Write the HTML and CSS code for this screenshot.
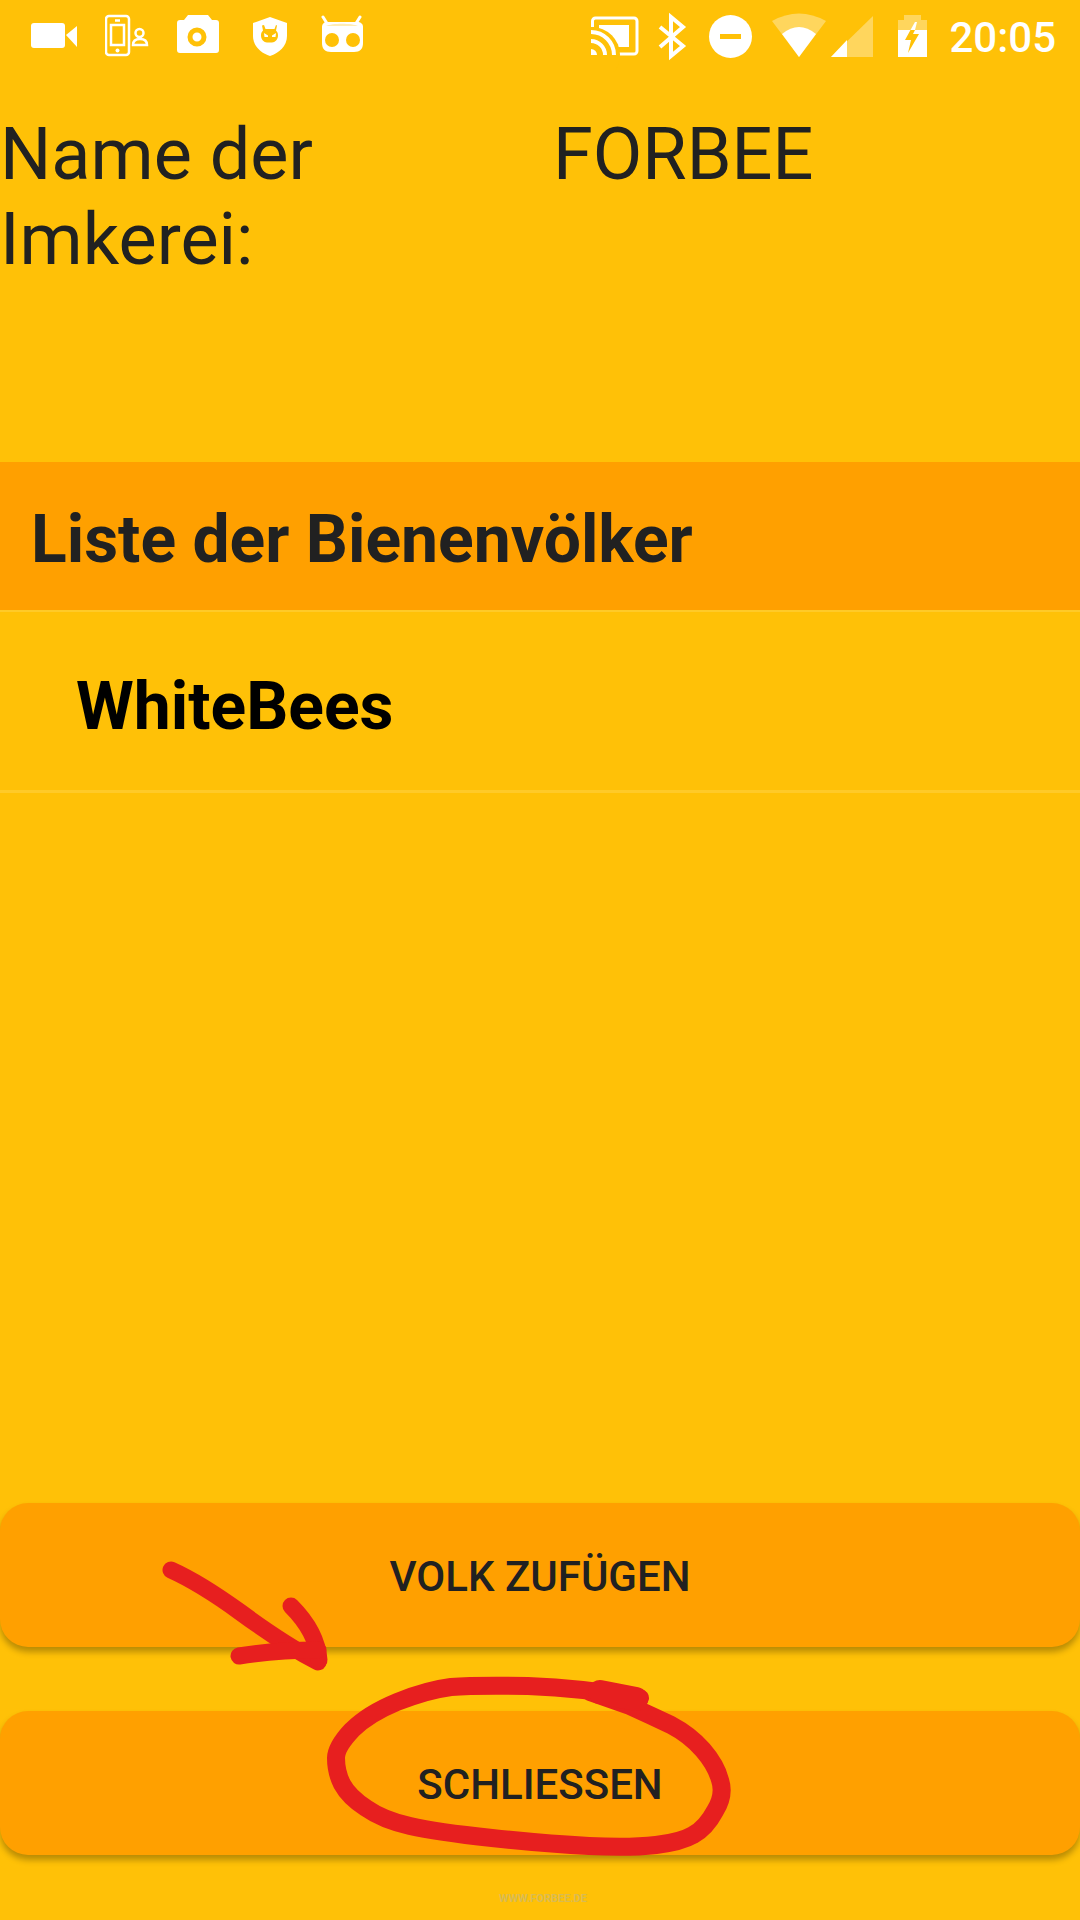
FILE: index.html
```html
<!DOCTYPE html>
<html lang="de">
<head>
    <meta charset="UTF-8">
    <meta name="viewport" content="width=device-width, initial-scale=1.0">
    <title>Liste der Bienenvölker</title>
    <link rel="stylesheet" href="styles.css">
</head>
<body>
    <div class="page">
        <header class="statusbar">
            <div class="status-left">
                <svg class="ic" width="74" height="72" viewBox="0 0 74 72"><rect y="23" width="34" height="25" rx="3"/><path d="M35 35 46 26V47Z"/></svg>
                <svg class="ic" width="72" height="72" viewBox="0 0 72 72"><g class="line"><rect x="1" y="16" width="23" height="39" rx="3"/><rect x="6" y="25" width="13" height="20"/><path d="M10 20.500h5"/><circle cx="34.500" cy="33" r="4"/><path d="M28 45c0-4 3-6 7-6s7 2 7 6z"/></g><circle cx="12.500" cy="50.500" r="2"/></svg>
                <svg class="ic" width="76" height="72" viewBox="0 0 76 72"><path d="M11 15h20l4 5h4a3 3 0 0 1 3 3v27a3 3 0 0 1-3 3H3a3 3 0 0 1-3-3V23a3 3 0 0 1 3-3h4z"/><circle class="hole-ring" cx="20" cy="37" r="7"/></svg>
                <svg class="ic" width="68" height="72" viewBox="0 0 68 72"><path d="M17 17 34 23V36C34 46 26 53 17 56 8 53 0 46 0 36V23Z"/><path class="hole" d="M11 25l1.500 4h9l1.500-4 1 .5-1 5c1.500 1.500 2 3 2 5 0 4-3 7-6 7h-5c-3 0-6-3-6-7 0-2 .5-3.500 2-5l-1-5z"/><path d="M11 33l4 2.500v1.500h-3.500zM23 33l-4 2.500v1.500h3.500z"/></svg>
                <svg class="ic" width="44" height="72" viewBox="0 0 44 72"><path class="stick" d="M2 17 7 25M39 17 34 25"/><path d="M6 22h30c4 0 6 2 6 5v16c0 6-3 9-9 9H10c-6 0-9-3-9-9V27c0-3 2-5 5-5z"/><path class="band" d="M5 26c6-3 26-3 32 0z"/><circle class="hole" cx="11" cy="40" r="7"/><circle class="hole" cx="32" cy="40" r="7"/></svg>
            </div>
            <div class="status-right">
                <svg class="ic" width="67" height="72" viewBox="0 0 67 72"><path class="line3" d="M1.500 27V21a3 3 0 0 1 3-3H43a3 3 0 0 1 3 3V51a3 3 0 0 1-3 3H25"/><rect x="8" y="25" width="30" height="22"/><circle class="hole" cx="1" cy="55" r="28"/><path d="M0 49a6 6 0 0 1 6 6H0z"/><path class="line4" d="M0 41a14 14 0 0 1 14 14M0 32a23 23 0 0 1 23 23"/></svg>
                <svg class="ic" width="51" height="72" viewBox="0 0 51 72"><path class="line4" d="M2 27 25 46 13 56V17L25 27 2 47"/></svg>
                <svg class="ic" width="63" height="72" viewBox="0 0 63 72"><circle cx="21.500" cy="36.500" r="21.500"/><rect class="hole" x="11" y="34" width="21" height="5"/></svg>
                <svg class="ic" width="58" height="72" viewBox="0 0 58 72"><path class="dim" d="M27 57 0 21Q27 6 54 21Z"/><path d="M27 57 10 34Q27 20 44 34Z"/></svg>
                <svg class="ic" width="68" height="72" viewBox="0 0 68 72"><path class="dim" d="M1 57 43 16V57Z"/><path d="M1 57 17 40V57Z"/></svg>
                <svg class="ic" width="51" height="72" viewBox="0 0 51 72"><path class="dim" d="M6 15H23V20H29V30H0V20H6Z"/><path d="M0 30H12.500L7 40H13L10 53 21 34H15L17 30H29V57H0Z"/><path d="M17 22 12.500 30H17L19 22Z"/></svg>
                <span class="clock">20:05</span>
            </div>
        </header>

        <section class="info">
            <div class="info-label">Name der Imkerei:</div>
            <div class="info-value">FORBEE</div>
        </section>

        <h2 class="list-title">Liste der Bienenvölker</h2>
        <ul class="list">
            <li class="list-row">WhiteBees</li>
        </ul>

        <div class="actions">
            <button class="btn">Volk zufügen</button>
            <button class="btn">Schließen</button>
        </div>

        <span class="watermark">WWW.FORBEE.DE</span>

        <!-- red pen marks drawn on top of the screenshot -->
        <svg class="marks" width="1080" height="1920" viewBox="0 0 1080 1920">
            <path class="arrow" d="M171 1570Q200 1583 240 1612 285 1645 318 1662"/>
            <path class="arrow" d="M291 1606Q317 1632 319 1660"/>
            <path class="arrow" d="M239 1656Q276 1650 318 1650"/>
            <path d="M640 1698Q582 1688 528 1686 475 1685 451 1687 427 1690 397 1702 368 1714 352 1730 336 1747 336 1758 336 1772 342 1784 349 1797 366 1808 383 1820 410 1826 436 1832 492 1838 548 1844 589 1846 630 1848 656 1845 681 1842 693 1835 706 1828 715 1811 725 1795 720 1780 716 1765 703 1750 690 1735 671 1725 652 1716 630 1706L590 1692"/>
            <path class="pen-end" d="M600 1692 636 1699"/>
        </svg>
    </div>
</body>
</html>
```

FILE: styles.css
```css
body{
    margin:0;
    padding:0;
    background-color:#ffc107;
    font-family:Roboto,"Liberation Sans",sans-serif;
    color:#212121;
}
.page{
    position:relative;
    width:1080px;
    height:1920px;
    overflow:hidden;
    display:flex;
    flex-direction:column;
}

/* status bar */
.statusbar{
    height:72px;
    flex:none;
    display:flex;
    justify-content:space-between;
    padding:0 24px 0 31px;
}
.status-left,.status-right{
    display:flex;
    align-items:center;
}
.ic{
    display:block;
    flex:none;
    fill:#fff;
}
.line{
    fill:none;
    stroke:#fff;
    stroke-width:2.500;
}
.line3,.line4,.stick{
    fill:none;
    stroke:#fff;
}
.line3{
    stroke-width:3;
}
.line4{
    stroke-width:4;
}
.stick{
    stroke-width:3;
    stroke-linecap:round;
}
.hole{
    fill:#ffc107;
}
.hole-ring{
    fill:#fff;
    stroke:#ffc107;
    stroke-width:5;
}
.band{
    fill:#ffecb3;
}
.dim{
    fill:#fff;
    opacity:.35;
}
.clock{
    color:#fff;
    font-size:42px;
    font-weight:500;
    line-height:72px;
    padding-top:3px;
}

/* beekeeping name */
.info{
    height:350px;
    flex:none;
    padding-top:40px;
    display:grid;
    grid-template-columns:553px 1fr;
    font-size:72px;
    line-height:85px;
    align-content:start;
}
.info-label{
    padding-right:180px;
}

/* colony list */
.list-title{
    margin:0;
    height:148px;
    flex:none;
    padding-left:31px;
    font-size:66px;
    font-weight:700;
    line-height:156px;
    background-color:#ffa000;
    border-bottom:2px solid #ffca28;
}
.list{
    flex:1;
    margin:0;
    padding:0;
    list-style:none;
}
.list-row{
    height:178px;
    padding-left:76px;
    font-size:66px;
    font-weight:700;
    line-height:190px;
    color:#000;
    border-bottom:3px solid #ffca28;
}

/* buttons */
.actions{
    flex:none;
    display:flex;
    flex-direction:column;
    gap:64px;
    padding-bottom:65px;
}
.btn{
    height:144px;
    padding-top:3px;
    border:none;
    border-radius:28px;
    background-color:#ffa000;
    color:#212121;
    font-family:Roboto,"Liberation Sans",sans-serif;
    font-size:42px;
    font-weight:500;
    text-transform:uppercase;
    box-shadow:0 5px 6px rgba(0,0,0,.28);
}

.watermark{
    position:absolute;
    left:499px;
    top:1892px;
    font-size:11px;
    font-weight:700;
    color:#d9bb52;
}
.marks{
    position:absolute;
    left:0;
    top:0;
    fill:none;
    stroke:#e71f1f;
    stroke-width:18;
    stroke-linecap:round;
    stroke-linejoin:round;
}
.arrow{
    stroke-width:17;
}
.pen-end{
    stroke-width:24;
}
```
